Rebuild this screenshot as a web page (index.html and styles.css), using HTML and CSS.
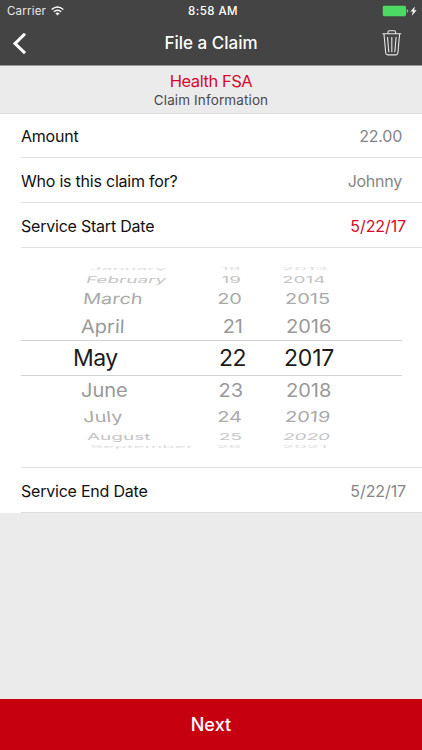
FILE: index.html
```html
<!DOCTYPE html>
<html lang="en">
<head>
    <meta charset="UTF-8">
    <title>File a Claim</title>
    <link rel="stylesheet" href="styles.css">
</head>
<body>
<div id="wrap">
    <div class="header">
        <!-- status bar -->
        <div class="status">
            <div class="carrier"><span>Carrier</span>
                <svg width="13" height="10" viewBox="0 0 13 10" fill="none" stroke="#fff" stroke-width="1.5"><path d="M.7 3.5Q6.5-1.5 12.3 3.5M2.8 5.8Q6.5 2.7 10.2 5.8"/><path d="M4.4 7.2Q6.5 5.6 8.6 7.2L6.5 9.5Z" fill="#fff" stroke="none"/></svg>
            </div>
            <span class="clock">8:58 AM</span>
            <div class="battery">
                <svg width="36" height="12" viewBox="0 0 36 12"><rect x=".8" y=".8" width="23.2" height="10.4" rx="1.4" fill="#4cd964"/><path d="M24.7 4v4q1.6-.4 1.6-2t-1.6-2" fill="#4cd964"/><path d="M33 1.4 28.4 6.6H31L29.7 10.8 34.6 5.2H32Z" fill="#fff"/></svg>
            </div>
        </div>
        <!-- nav bar -->
        <div class="nav">
            <svg class="back" width="15" height="22" viewBox="0 0 15 22" fill="none" stroke="#fff" stroke-width="3"><path d="M13 .8 3 10.6 13 20.2"/></svg>
            <h1>File a Claim</h1>
            <svg class="trash" width="20" height="27" viewBox="0 0 20 27" fill="none" stroke="#e6e6e6" stroke-width="1.1"><path d="M.4 3.7H19.2M6 3.5V2Q6 .7 7.3 .7H12.3Q13.6 .7 13.6 2V3.5M2 4 3.7 22.9Q4 24.9 5.7 24.9H13.9Q15.6 24.9 15.9 22.9L17.6 4M5.5 7 6.8 22.2M9.8 7V22.2M14.1 7 12.8 22.2"/></svg>
        </div>
    </div>
    <div class="plan">
        <h2>Health FSA</h2>
        <p>Claim Information</p>
    </div>
    <div class="form">
        <div class="row amount"><label>Amount</label><span>22.00</span></div>
        <div class="row"><label>Who is this claim for?</label><span>Johnny</span></div>
        <div class="row date active"><label>Service Start Date</label><span>5/22/17</span></div>
        <!-- date wheel, rows get flatter away from the middle -->
        <div class="picker">
            <div class="item up4"><span>January</span><span>18</span><span>2013</span></div>
            <div class="item up3"><span>February</span><span>19</span><span>2014</span></div>
            <div class="item up2"><span>March</span><span>20</span><span>2015</span></div>
            <div class="item up1"><span>April</span><span>21</span><span>2016</span></div>
            <div class="item selected"><span>May</span><span>22</span><span>2017</span></div>
            <div class="item down1"><span>June</span><span>23</span><span>2018</span></div>
            <div class="item down2"><span>July</span><span>24</span><span>2019</span></div>
            <div class="item down3"><span>August</span><span>25</span><span>2020</span></div>
            <div class="item down4"><span>September</span><span>26</span><span>2021</span></div>
        </div>
        <div class="row date last"><label>Service End Date</label><span>5/22/17</span></div>
    </div>
    <div class="next">Next</div>
</div>
</body>
</html>
```
FILE: styles.css
```css
*{ margin:0; padding:0; box-sizing:border-box; }
body{ font-family:Inter, "Liberation Sans", sans-serif; background:#ebebeb; }
#wrap{ width:422px; height:750px; display:flex; flex-direction:column; overflow:hidden; }
.header{ height:65px; background:#444; color:#fff; }
.status{ height:22px; display:grid; grid-template-columns:1fr auto 1fr; align-items:center; padding:0 4px 0 7px; font-size:11.5px; }
.carrier{ display:flex; align-items:center; gap:5px; letter-spacing:.2px; color:#e8e8e8; }
.clock{ font-weight:500; font-size:11.5px; letter-spacing:.45px; margin-left:1px; }
.battery{ display:flex; justify-content:flex-end; }
.nav{ height:43px; display:grid; grid-template-columns:1fr auto 1fr; align-items:center; padding:0 20px 0 12px; }
.nav h1{ font-size:17px; line-height:20px; font-weight:500; letter-spacing:0; margin:-2px -8px 0 0; }
.trash{ justify-self:end; }
.plan{ height:49px; padding-top:6px; text-align:center; border-top:1px solid #999; border-bottom:1px solid #ddd; background:#ebebeb; }
.plan h2{ font-size:16.5px; line-height:19px; font-weight:400; letter-spacing:-.45px; color:#d5082b; }
.plan p{ font-size:13.5px; line-height:18px; letter-spacing:.12px; color:#4a4a4a; }
.form{ background:#fff; }
.row{ height:45px; margin-left:21px; padding:1px 20px 0 0; display:flex; justify-content:space-between; align-items:center; border-bottom:1px solid #e1e1e1; font-size:16px; letter-spacing:-.22px; color:#111; }
.row span{ color:#858587; letter-spacing:-.25px; }
.row.amount{ height:44px; }
.row.date{ padding-right:16px; padding-top:2px; }
.row.date span{ letter-spacing:-.1px; }
.row.active span{ color:#d5082b; }
.row.last{ border-bottom-color:#ddd; }

.picker{ height:220px; margin-left:21px; padding-top:16px; border-bottom:1px solid #e1e1e1; }
.item{ display:grid; grid-template-columns:145px 80px 1fr; align-items:center; margin-right:20px; color:#999; font-size:20px; line-height:0; white-space:nowrap; }
.item span{ transform-origin:0 50%; }
.item span:nth-child(2){ text-align:right; transform-origin:100% 50%; }
.item span:nth-child(3){ padding-left:43px; }
.selected{ height:36px; border-top:1px solid #d2d2d2; border-bottom:1px solid #d2d2d2; font-size:23px; letter-spacing:-.5px; color:#1c1c1c; padding-left:52px; grid-template-columns:93px 80px 1fr; }
.selected span:nth-child(3){ padding-left:38px; letter-spacing:-.2px; }
.up4{ height:9px; color:#ddd; padding-left:69px; grid-template-columns:76px 75px 1fr; }
.up3{ height:13px; color:#c4c4c4; padding-left:65px; grid-template-columns:80px 75px 1fr; font-size:19px; }
.up2{ height:25px; color:#aaa; padding-left:62px; grid-template-columns:83px 76px 1fr; }
.up1{ height:29px; padding-left:60px; grid-template-columns:85px 77px 1fr; }
.down1{ height:28px; padding-left:60px; grid-template-columns:85px 77px 1fr; }
.down2{ height:26px; color:#aaa; padding-left:62px; grid-template-columns:83px 76px 1fr; }
.down3{ height:13px; color:#c4c4c4; padding-left:66px; grid-template-columns:79px 76px 1fr; font-size:19px; }
.down4{ height:8px; color:#ddd; padding-left:69px; grid-template-columns:76px 75px 1fr; }
.up4 span:nth-child(3),.up3 span:nth-child(3),.down4 span:nth-child(3),.down3 span:nth-child(3){ padding-left:41px; }
.up4 span,.down4 span{ transform:scaleY(.18); }
.up3 span,.down3 span{ transform:scaleY(.48); }
.up2 span,.down2 span{ transform:scaleY(.75); }
.up1 span,.down1 span{ transform:scaleY(.93); }
/* the month column leans towards the middle of the wheel */
.up3 span:first-child{ transform:scaleY(.48) skewX(-8deg); }
.up2 span:first-child{ transform:scaleY(.75) skewX(-5deg); }
.up1 span:first-child{ transform:scaleY(.93) skewX(-2deg); }
.down2 span:first-child{ transform:scaleY(.75) skewX(4deg); }
.down2 span:last-child{ transform:scaleY(.75) skewX(-4deg); }
.down3 span:last-child{ transform:scaleY(.48) skewX(-8deg); }

.next{ height:51px; margin-top:auto; background:#c6000f; color:#fff; font-size:18px; line-height:51px; font-weight:500; letter-spacing:.1px; text-align:center; }
```
